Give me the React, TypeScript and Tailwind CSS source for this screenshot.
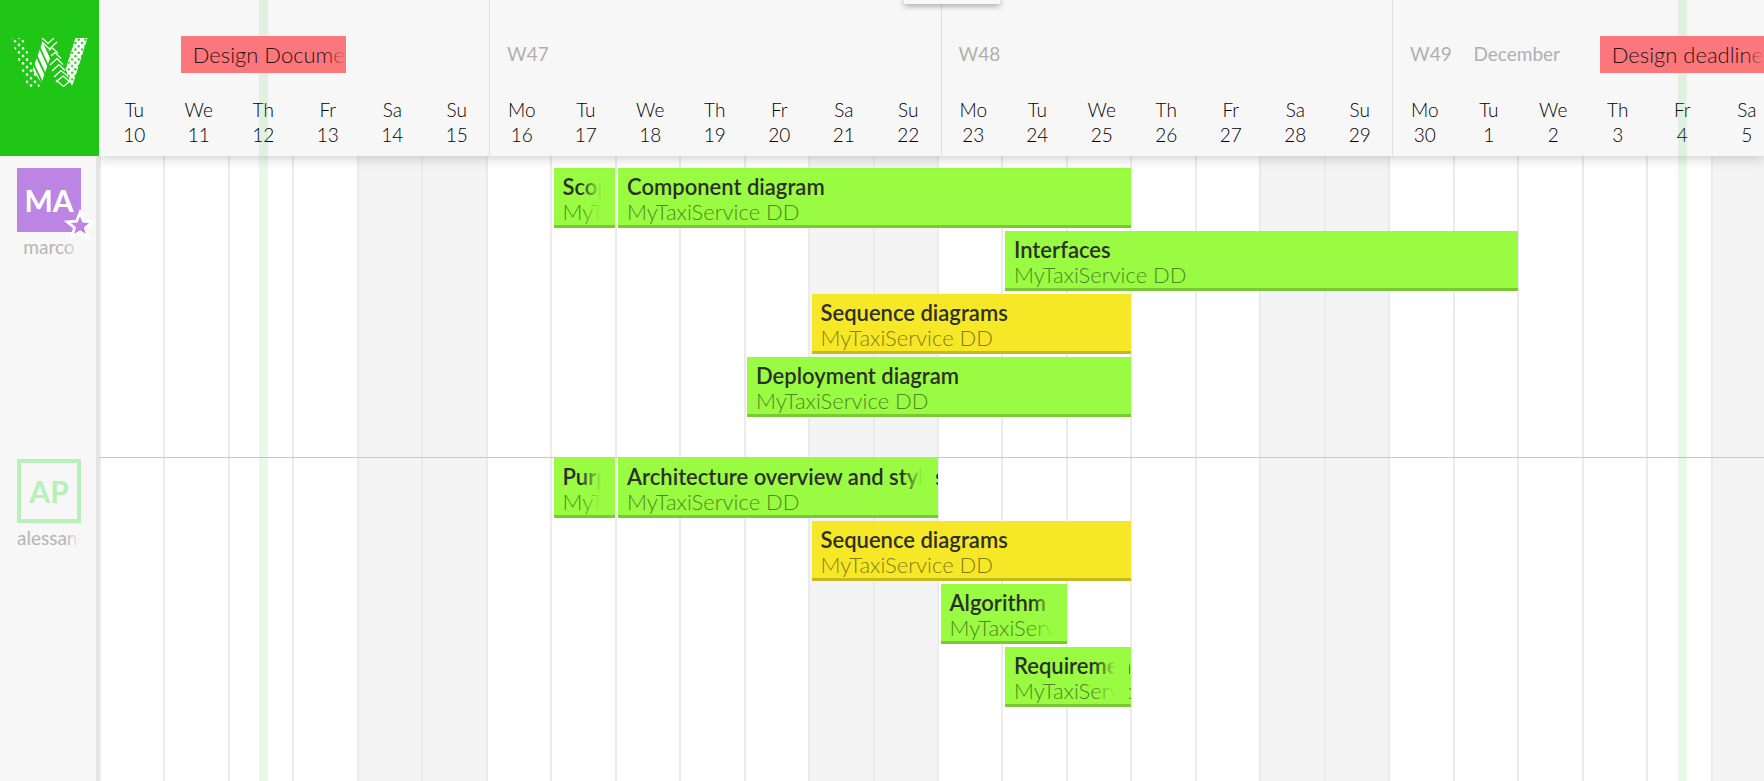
import React from "react";

type Day = { name: string; date: number; label?: string; month?: string };
type Task = { title: string; from: number; to: number; tone: "green" | "yellow"; overflows?: boolean };
type Person = { initials: string; name: string; owner: boolean; tasks: Task[] };

const WEEKDAYS = ["Mo", "Tu", "We", "Th", "Fr", "Sa", "Su"];
const FIRST_DATE = 10;
const DAYS_IN_MONTH = 30;
const DAY_COUNT = 26;

const days: Day[] = Array.from({ length: DAY_COUNT }, (_, i) => {
  const weekday = (i + 1) % 7;
  const raw = FIRST_DATE + i;
  const date = raw > DAYS_IN_MONTH ? raw - DAYS_IN_MONTH : raw;
  return {
    name: WEEKDAYS[weekday],
    date,
    label: weekday === 0 ? `W${47 + Math.floor(i / 7)}` : undefined,
    month: date === 1 ? "December" : undefined,
  };
});

const milestones = [
  { title: "Design Document", day: 3 },
  { title: "Design deadline", day: 25 },
];

const project = "MyTaxiService DD";

const people: Person[] = [
  {
    initials: "MA",
    name: "marco",
    owner: true,
    tasks: [
      { title: "Scope", from: 8, to: 9, tone: "green" },
      { title: "Component diagram", from: 9, to: 17, tone: "green" },
      { title: "Interfaces", from: 15, to: 23, tone: "green" },
      { title: "Sequence diagrams", from: 12, to: 17, tone: "yellow" },
      { title: "Deployment diagram", from: 11, to: 17, tone: "green" },
    ],
  },
  {
    initials: "AP",
    name: "alessandro",
    owner: false,
    tasks: [
      { title: "Purpose", from: 8, to: 9, tone: "green" },
      { title: "Architecture overview and styles", from: 9, to: 14, tone: "green", overflows: true },
      { title: "Sequence diagrams", from: 12, to: 17, tone: "yellow" },
      { title: "Algorithm", from: 14, to: 16, tone: "green" },
      { title: "Requirements", from: 15, to: 17, tone: "green", overflows: true },
    ],
  },
];

const tones = {
  green: {
    box: "bg-[#99fc42] border-[#7ac934]",
    fade: "bg-linear-to-r from-[#99fc42]/0 to-[#99fc42] to-60%",
    sub: "text-[#4f8722]",
  },
  yellow: {
    box: "bg-[#f7e827] border-[#c5b91f]",
    fade: "bg-linear-to-r from-[#f7e827]/0 to-[#f7e827] to-60%",
    sub: "text-[#857d14]",
  },
};

function Logo() {
  return (
    <svg viewBox="0 0 78 50" className="h-[50px] w-[78px]" role="img" aria-label="W">
      <defs>
        <pattern id="dots" width="8" height="7.4" patternUnits="userSpaceOnUse">
          <circle cx="4" cy="3.2" r="1.3" fill="#fff" />
          <circle cx="0" cy="6.9" r="1.3" fill="#fff" />
          <circle cx="8" cy="6.9" r="1.3" fill="#fff" />
          <circle cx="0" cy="-0.5" r="1.3" fill="#fff" />
          <circle cx="8" cy="-0.5" r="1.3" fill="#fff" />
        </pattern>
        <pattern id="holes" width="6.6" height="6.6" patternUnits="userSpaceOnUse">
          <rect width="6.6" height="6.6" fill="#fff" />
          <circle cx="1.7" cy="1.7" r="1.2" fill="#1fc615" />
          <circle cx="5" cy="5" r="1.2" fill="#1fc615" />
        </pattern>
        <clipPath id="stripeClip">
          <path d="M31.500 4 39 20 30.500 45 21.500 32Z" />
        </clipPath>
      </defs>
      <path d="M0 0H12L22 29 29 49H16.500Z" fill="url(#dots)" />
      <g clipPath="url(#stripeClip)" stroke="#fff" strokeWidth="4.300">
        <path d="M28.500 2 40 27M25.500 10 37 35M22.500 19 34 43M19.500 27 31 51" />
      </g>
      <path
        d="M31 0 37 5.500 43 0M31 4 38.500 11 46 4M38 12.500 41 9.500 47 15M40 18 44 14.500 50 20.500M39 27 46 20.500 52 26.500M41 33 48 26.500 54 32.500M43 39 50 32.500 57 38.500M45 44 52 38 59 44M45 42 52.500 48.500 60 42"
        fill="none"
        stroke="#fff"
        strokeWidth="1.2"
      />
      <path d="M64.500 0H76.500L61 49 54.500 31Z" fill="url(#holes)" />
    </svg>
  );
}

function Star() {
  return (
    <svg viewBox="0 0 32 32" className="absolute -right-[15px] -bottom-[9px] size-8" aria-hidden="true">
      <path
        d="M16 3.500 19.400 12.200 28.800 12.800 21.500 18.800 24 28 16 22.800 8 28 10.500 18.800 3.200 12.800 12.600 12.200Z"
        fill="#bd85e3"
        stroke="#fff"
        strokeWidth="2.700"
      />
    </svg>
  );
}

function TaskCard({ task }: { task: Task }) {
  const tone = tones[task.tone];
  return (
    <article
      className={`relative mr-[3px] h-[60px] overflow-hidden border-b-3 pt-[6px] pl-[9px] whitespace-nowrap ${tone.box}`}
      style={{ gridColumn: `${task.from} / ${task.to}` }}
    >
      <h3 className="text-[22px] leading-[25px] font-semibold text-[#2c3028]">{task.title}</h3>
      <p className={`text-[22px] leading-[25px] font-light ${tone.sub}`}>{project}</p>
      <span
        className={`absolute inset-y-0 w-[34px] ${task.overflows ? "right-[2px]" : "right-0"} ${tone.fade}`}
      />
    </article>
  );
}

function Lane({ person, last }: { person: Person; last: boolean }) {
  const row = last ? "row-start-3" : "row-start-2";
  return (
    <>
      <div className={`relative z-30 col-start-1 border-r-3 border-[#e4e4e4] bg-[#f7f7f7] ${row}`}>
        <div className={`flex flex-col items-start pl-[17px] ${last ? "pt-px" : "pt-3"}`}>
          <div
            className={`relative flex size-16 items-center justify-center text-[30px] leading-none font-bold ${
              person.owner ? "bg-[#bd85e3] text-white" : "border-4 border-[#b5f1b9] text-[#b5f1b9]"
            }`}
          >
            {person.initials}
            {person.owner && <Star />}
          </div>
          <div className="relative mt-[3px] w-16 overflow-hidden text-[19px] leading-6 text-[#b5b5b5]">
            <span className={person.owner ? "block text-center" : "block"}>{person.name}</span>
            <span className="absolute inset-y-0 right-0 w-4 bg-linear-to-r from-[#f7f7f7]/0 to-[#f7f7f7]" />
          </div>
        </div>
      </div>
      <section
        aria-label={person.name}
        className={`relative z-10 col-start-2 min-w-0 ${row} ${last ? "" : "border-b border-[#c8c8c8] pt-3 pb-10"}`}
      >
        <div className="-mr-[15px] ml-[3px] grid auto-rows-max grid-cols-[repeat(26,minmax(0,1fr))] gap-y-[3px]">
          {person.tasks.map((t, i) => (
            <TaskCard key={i} task={t} />
          ))}
        </div>
      </section>
    </>
  );
}

export default function App() {
  return (
    <main className="relative grid min-h-screen grid-cols-[99px_minmax(0,1fr)] grid-rows-[156px_auto_1fr] overflow-hidden bg-white font-[Lato,'Open_Sans',sans-serif]">
      <div className="z-30 col-start-1 row-start-1 flex justify-center bg-[#1fc615] pt-[38px]">
        <Logo />
      </div>

      <header className="z-20 col-start-2 row-start-1 bg-[#f7f7f7] shadow-[0_2px_12px_rgba(0,0,0,0.2)]">
        <div className="-mr-[15px] ml-[3px] grid h-full grid-cols-[repeat(26,minmax(0,1fr))]">
          {days.map((d, i) => (
            <div key={i} className={`flex flex-col pt-9 ${d.label ? "border-l border-[#dfdfdf]" : ""}`}>
              <div className="flex h-[37px] items-center pl-[17px] text-[19px] whitespace-nowrap text-[#b0b0b0]">
                {d.label ?? d.month}
              </div>
              <div className="mt-6 text-center text-[19px] leading-[25px] font-light text-black">
                <div>{d.name}</div>
                <div>{d.date}</div>
              </div>
            </div>
          ))}
        </div>
      </header>

      <div
        className="col-start-2 row-span-2 row-start-2 -mr-[11px] grid grid-cols-[repeat(26,minmax(0,1fr))]"
        aria-hidden="true"
      >
        {days.map((d, i) => (
          <div
            key={i}
            className={`border-l-2 border-[#ebebeb] ${d.name[0] === "S" ? "bg-[#f4f4f4]" : ""}`}
          />
        ))}
      </div>

      <div className="pointer-events-none z-20 col-start-2 row-span-3 row-start-1 -mr-[15px] ml-[3px] grid grid-cols-[repeat(26,minmax(0,1fr))]">
        {milestones.map((m) => (
          <React.Fragment key={m.title}>
            <span
              className="row-start-1 w-[9px] justify-self-center bg-[#1fc615]/10"
              style={{ gridColumn: m.day }}
            />
            <div
              className="relative row-start-1 mt-9 h-[37px] w-[165px] justify-self-center overflow-hidden bg-[#fb777c] pl-3 text-[22px] leading-[37px] font-light whitespace-nowrap text-[#2a1415]"
              style={{ gridColumn: `${m.day - 1} / ${m.day + 2}` }}
            >
              {m.title}
              <span className="absolute inset-y-0 right-0 w-5 bg-linear-to-r from-[#fb777c]/0 to-[#fb777c]" />
            </div>
          </React.Fragment>
        ))}
      </div>

      {people.map((p, i) => (
        <Lane key={p.initials} person={p} last={i === people.length - 1} />
      ))}

      <div className="absolute top-0 left-[904px] z-40 h-1 w-24 bg-[#f8f8f8] shadow-[0_1px_6px_rgba(0,0,0,0.5)]" />
    </main>
  );
}
